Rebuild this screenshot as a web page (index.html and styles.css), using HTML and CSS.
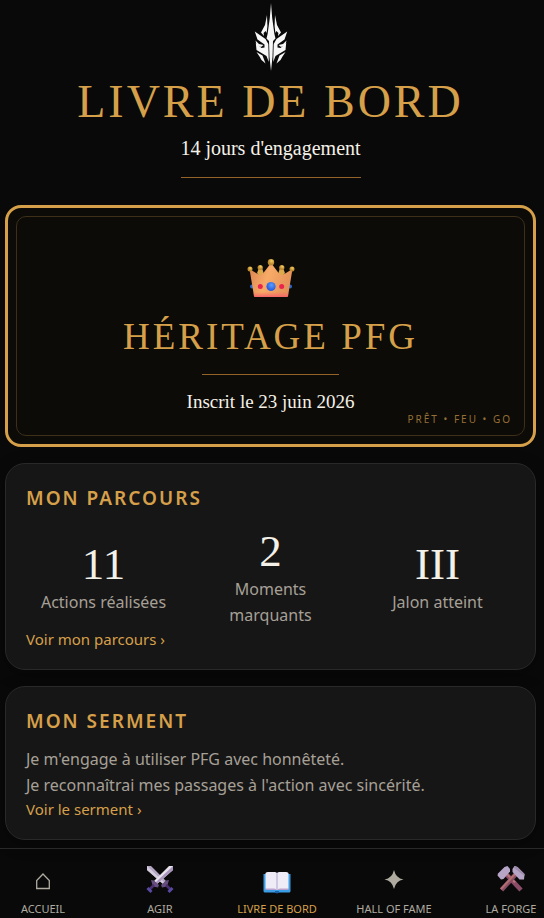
FILE: index.html
```html
<!DOCTYPE html>
<html lang="fr">
<head>
<meta charset="utf-8">
<meta name="viewport" content="width=device-width, initial-scale=1">
<title>Livre de bord</title>
<link rel="stylesheet" href="styles.css">
</head>
<body>
<main class="page">
  <header class="hero">
    <svg class="emblem" viewBox="0 0 40 70" aria-hidden="true">
      <g fill="#f7f7f7">
        <path d="M20 1 L21.200 16 L23.400 32 L24.500 36.500 L22 39 L21.500 55 L20 69 L18.500 55 L18 39 L15.500 36.500 L16.600 32 L18.800 16Z"/>
        <path d="M16 13 L14 23 L10 30.500 L13 34 L12.600 31 L14.600 29 L15.600 31 L16.400 24Z"/>
        <path d="M3.800 29.500 L14.500 37 L17.300 42 L17.800 60 L15.500 54 L5.500 48 L4.800 41 L10.500 46 L13.500 45.500 L13.500 42.500 L6.500 37.500Z"/>
        <path d="M4.500 38.500 L8 42 L12.500 43 L10 45 L5.500 43Z"/>
        <path d="M5.500 50 L11.500 53.500 L14.500 61.500 L10.500 58 L8.500 54.500Z"/>
        <path d="M24 13 L26 23 L30 30.500 L27 34 L27.400 31 L25.400 29 L24.400 31 L23.600 24Z"/>
        <path d="M36.200 29.500 L25.500 37 L22.700 42 L22.200 60 L24.500 54 L34.500 48 L35.200 41 L29.500 46 L26.500 45.500 L26.500 42.500 L33.500 37.500Z"/>
        <path d="M35.500 38.500 L32 42 L27.500 43 L30 45 L34.500 43Z"/>
        <path d="M34.500 50 L28.500 53.500 L25.500 61.500 L29.500 58 L31.500 54.500Z"/>
      </g>
    </svg>
    <h1 class="title">LIVRE DE BORD</h1>
    <p class="subtitle">14 jours d'engagement</p>
    <hr class="rule rule-wide">
  </header>

  <section class="crest">
    <div class="crest-inner">
      <svg class="crown" viewBox="0 0 48 40" aria-hidden="true">
        <defs>
          <linearGradient id="crownBody" x1="0" x2="1" y1="0" y2="0.3"><stop offset="0" stop-color="#d9804f"/><stop offset=".5" stop-color="#f8ab68"/><stop offset="1" stop-color="#e5935a"/></linearGradient>
          <linearGradient id="crownBase" x1="0" x2="0" y1="0" y2="1"><stop offset=".85" stop-color="#f56a63" stop-opacity="0"/><stop offset="1" stop-color="#f5646c"/></linearGradient>
          <radialGradient id="gold" cx=".6" cy=".3"><stop offset="0" stop-color="#f3ce63"/><stop offset="1" stop-color="#bd8a32"/></radialGradient>
          <radialGradient id="sapphire" cx=".55" cy=".35"><stop offset="0" stop-color="#5aa0ff"/><stop offset="1" stop-color="#2f61e0"/></radialGradient>
        </defs>
        <path d="M12 9 H15 L17 15 L13 18 L10 14Z M36 9 H33 L31 15 L35 18 L38 14Z" fill="#dca94c"/>
        <circle cx="13.200" cy="8.500" r="2.600" fill="url(#gold)"/><circle cx="34.800" cy="8.500" r="2.600" fill="url(#gold)"/>
        <circle cx="5" cy="27.500" r="2" fill="#286bc9"/><circle cx="43" cy="27.500" r="2" fill="#286bc9"/>
        <path d="M2.500 10 L11.500 15.500 Q14 17 16 14.500 L24 4 L32 14.500 Q34 17 36.500 15.500 L45.500 10 L41 37 Q40.800 38 39.500 38 L8.500 38 Q7.200 38 7 37Z" fill="url(#crownBody)"/>
        <path d="M2.500 10 L11.500 15.500 Q14 17 16 14.500 L24 4 L32 14.500 Q34 17 36.500 15.500 L45.500 10 L41 37 Q40.800 38 39.500 38 L8.500 38 Q7.200 38 7 37Z" fill="url(#crownBase)"/>
        <circle cx="3" cy="10" r="2.500" fill="url(#gold)"/><circle cx="45" cy="10" r="2.500" fill="url(#gold)"/>
        <circle cx="24" cy="3.200" r="3.200" fill="url(#gold)"/>
        <circle cx="24" cy="27.500" r="4.600" fill="url(#sapphire)"/>
        <circle cx="13.300" cy="27.500" r="2.500" fill="#e9244d"/><circle cx="34.700" cy="27.500" r="2.500" fill="#e9244d"/>
      </svg>
      <h2 class="crest-title">HÉRITAGE PFG</h2>
      <hr class="rule rule-short">
      <p class="crest-date">Inscrit le 23 juin 2026</p>
      <p class="motto">PRÊT • FEU • GO</p>
    </div>
  </section>

  <section class="card">
    <h2 class="card-title">MON PARCOURS</h2>
    <div class="stats">
      <div class="stat"><strong class="stat-value">11</strong><span class="stat-label">Actions réalisées</span></div>
      <div class="stat"><strong class="stat-value">2</strong><span class="stat-label">Moments marquants</span></div>
      <div class="stat"><strong class="stat-value">III</strong><span class="stat-label">Jalon atteint</span></div>
    </div>
    <a class="more" href="#parcours">Voir mon parcours ›</a>
  </section>

  <section class="card">
    <h2 class="card-title">MON SERMENT</h2>
    <p class="oath">Je m'engage à utiliser PFG avec honnêteté.<br>Je reconnaîtrai mes passages à l'action avec sincérité.</p>
    <a class="more" href="#serment">Voir le serment ›</a>
  </section>
</main>

<nav class="tabs" aria-label="Navigation principale">
  <a class="tab" href="#accueil">
    <svg class="tab-icon" viewBox="0 0 28 28" aria-hidden="true"><path d="M7.700 22.500 V14.500 L14 8 L20.300 14.500 V22.500Z" fill="none" stroke="#b0aba0" stroke-width="1.300"/></svg>
    <span>ACCUEIL</span>
  </a>
  <a class="tab" href="#agir">
    <svg class="tab-icon" viewBox="0 0 28 28" aria-hidden="true">
      <path d="M1 0 H5 L20 15 L17 18 L1 4Z" fill="#b5a6c4"/><path d="M1 0 L18.500 16.500 L17 18 L1 4Z" fill="#d3cddd"/>
      <path d="M27 0 H23 L8 15 L11 18 L27 4Z" fill="#e6e2ec"/><path d="M27 0 L9.500 16.500 L11 18 L27 4Z" fill="#a995bb"/>
      <path d="M5 14 L8 14.500 L13 19 L12 21.500 L7 20.500Z M23 14 L20 14.500 L15 19 L16 21.500 L21 20.500Z" fill="#654d7d"/>
      <path d="M8 19 L4 23 M20 19 L24 23" stroke="#4b2d72" stroke-width="2.600"/>
      <path d="M1.500 22 L5.500 26 M26.500 22 L22.500 26" stroke="#5949a4" stroke-width="3"/>
    </svg>
    <span>AGIR</span>
  </a>
  <a class="tab tab-active" href="#livre" aria-current="page">
    <svg class="tab-icon" viewBox="0 0 28 28" aria-hidden="true">
      <path d="M.500 8 H27.500 V25 Q27.500 26.500 26 26.500 H16 Q14 28 12 26.500 H2 Q.500 26.500 .500 25Z" fill="#3b9de5"/>
      <path d="M12 25 H16 V26.500 Q14 28 12 26.500Z" fill="#1763aa"/>
      <path d="M2.500 22 H25.500 V24 H2.500Z" fill="#b9a4cf"/>
      <path d="M2.500 7 Q3.500 6 5 6 H12 Q14 6 14 7.500 V24 Q13 22.500 11 22.500 H2.500Z M25.500 7 Q24.500 6 23 6 H16 Q14 6 14 7.500 V24 Q15 22.500 17 22.500 H25.500Z" fill="#efebf7"/>
      <path d="M14 7.500 V24" stroke="#c6bbd8" stroke-width="1.500"/>
    </svg>
    <span>LIVRE DE BORD</span>
  </a>
  <a class="tab" href="#hall">
    <svg class="tab-icon" viewBox="0 0 28 28" aria-hidden="true"><path d="M14 4 Q15.800 12.200 23.500 13.500 Q15.800 14.800 14 23 Q12.200 14.800 4.500 13.500 Q12.200 12.200 14 4Z" fill="#b0aba0"/></svg>
    <span>HALL OF FAME</span>
  </a>
  <a class="tab" href="#forge">
    <svg class="tab-icon" viewBox="0 0 28 28" aria-hidden="true">
      <path d="M9 8 L24 24" stroke="#8b4c68" stroke-width="4.500"/><path d="M9.500 7.500 L18 16.500" stroke="#b87478" stroke-width="2"/>
      <path d="M19 8 L4.500 24" stroke="#8b4c68" stroke-width="4.500"/><path d="M18 8 L4 23" stroke="#b0706f" stroke-width="2"/>
      <path d="M7.500 1 L10.500 0 L13 3 L13 5.500 L6.500 13 L4 13.500 L.500 9.500 L1 7.500Z" fill="#b7a5c8"/>
      <path d="M20.500 1 L17.500 0 L15.500 3 L15.500 6 L22.500 13.500 L27 13.500 L27.500 8Z" fill="#b7a5c8"/>
      <path d="M17.500 0 L20.500 1 L27.500 8 L27.500 10 L17 2Z" fill="#a08cad"/>
    </svg>
    <span>LA FORGE</span>
  </a>
</nav>
</body>
</html>
```

FILE: styles.css
```css
:root {
  --bg: #090909;
  --gold: #d6a04a;
  --ivory: #f4f1e8;
  --muted: #a6a097;
  --serif: "Liberation Serif", "Times New Roman", serif;
  --sans: "Noto Sans", "Open Sans", sans-serif;
}

* { box-sizing: border-box; }

body {
  margin: 0;
  min-height: 100vh;
  display: flex;
  flex-direction: column;
  background: var(--bg);
  color: var(--ivory);
  font-family: var(--sans);
}

h1, h2, p, hr { margin: 0; }
a { text-decoration: none; }

.page {
  flex: 1;
  display: flex;
  flex-direction: column;
  gap: 16px;
  padding: 2px 8px 8px 5px;
}

.hero {
  display: flex;
  flex-direction: column;
  align-items: center;
  padding-bottom: 11px;
}

.emblem { width: 40px; height: 70px; }

.title {
  margin-top: 4px;
  font: 400 46px/52px var(--serif);
  letter-spacing: 3px;
  color: var(--gold);
}

.subtitle, .crest-date { font: 400 20px/24px var(--serif); }
.subtitle { margin-top: 8px; }

.rule { height: 1px; border: 0; background: #94632a; }
.rule-wide { width: 180px; margin-top: 17px; }
.rule-short { width: 137px; margin-top: 16px; }

.crest {
  padding: 8px;
  border: 3px solid var(--gold);
  border-radius: 16px;
  background: #0c0b07;
}

.crest-inner {
  position: relative;
  display: flex;
  flex-direction: column;
  align-items: center;
  padding: 42px 14px 21px;
  border: 1px solid #3e2f19;
  border-radius: 10px;
}

.crown { width: 48px; height: 40px; }

.crest-title {
  margin-top: 17px;
  font: 400 37px/42px var(--serif);
  letter-spacing: 3px;
  color: var(--gold);
}

.crest-date { margin-top: 15px; font-size: 19px; }

.motto {
  position: absolute;
  right: 12px;
  bottom: 8px;
  font-size: 10px;
  line-height: 16px;
  letter-spacing: 2px;
  color: #956f35;
}

.card {
  padding: 20px 20px 19px;
  border: 1px solid #292929;
  border-radius: 20px;
  background: #161616;
  box-shadow: 0 4px 16px #00000059;
}

.card-title {
  font-size: 19px;
  line-height: 28px;
  font-weight: 600;
  letter-spacing: 2px;
  color: var(--gold);
}

.stats {
  display: grid;
  grid-template-columns: repeat(3, 1fr);
  align-items: center;
  gap: 12px;
  margin-top: 16px;
}

.stat {
  display: flex;
  flex-direction: column;
  gap: 2px;
  padding: 0 12px;
  text-align: center;
}

.stat-value { font: 400 45px/46px var(--serif); }
.stat-label, .oath { font-size: 16px; line-height: 26px; color: var(--muted); }
.oath { margin-top: 11px; }

.more {
  display: block;
  font-size: 15px;
  line-height: 22px;
  color: var(--gold);
}

.tabs {
  display: grid;
  grid-template-columns: repeat(5, minmax(0, 1fr));
  gap: 51px;
  height: 70px;
  padding: 17px 0 0 10px;
  border-top: 1px solid #292929;
  overflow: hidden;
}

.tab {
  display: flex;
  flex-direction: column;
  align-items: center;
  gap: 7px;
  font-size: 11px;
  line-height: 16px;
  white-space: nowrap;
  color: #b0aba0;
}

.tab-active { color: var(--gold); }
.tab-icon { flex: none; width: 28px; height: 28px; }
```
